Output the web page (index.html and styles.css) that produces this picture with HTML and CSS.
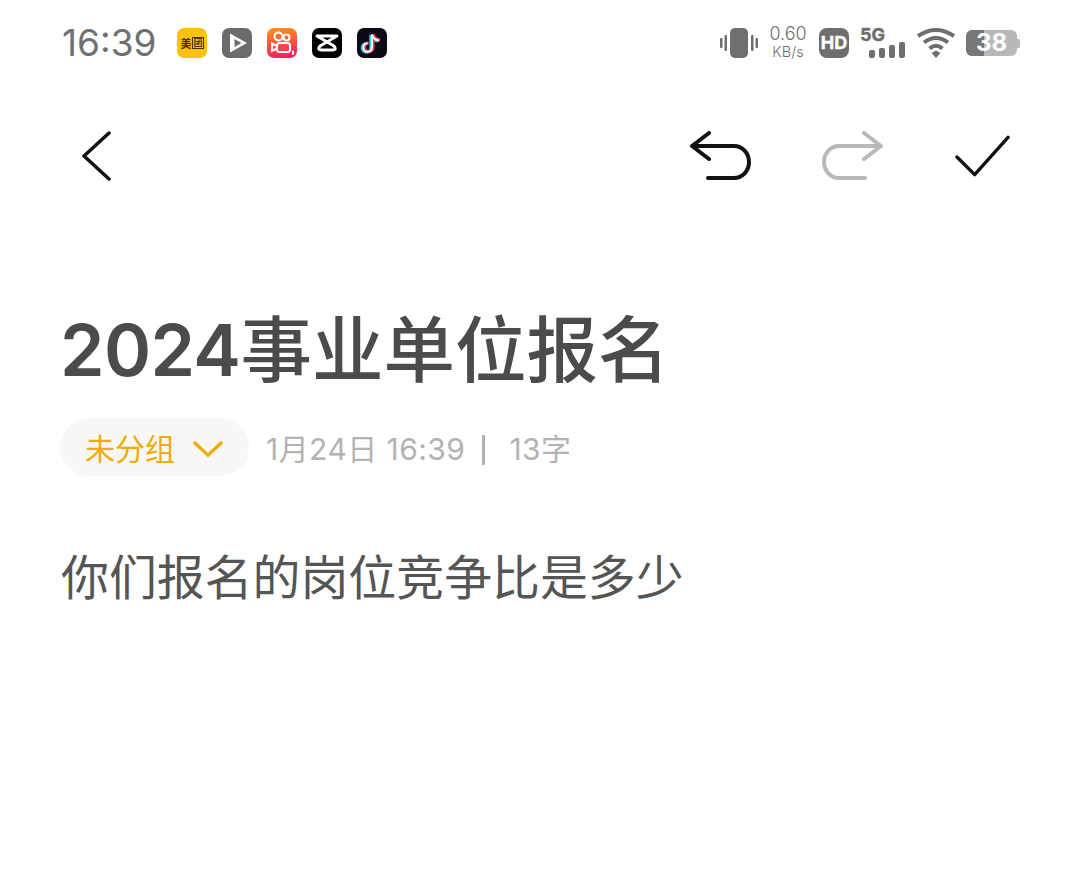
FILE: index.html
```html
<!DOCTYPE html>
<html lang="zh-CN">
<head>
    <meta charset="UTF-8">
    <title>2024事业单位报名</title>
    <link rel="stylesheet" href="styles.css">
</head>
<body>
    <!-- 状态栏 -->
    <div class="status-bar">
        <span class="clock">16:39</span>
        <div class="app-icons">
            <div class="app-icon meituan"><span>美</span><span class="tuan">团</span></div>
            <div class="app-icon player">
                <svg viewBox="0 0 30 30"><path d="M8 5.500 L25 15 L8 24.500 Z M12.500 11 V19 L19.500 15 Z" fill="#fff" fill-rule="evenodd"/></svg>
            </div>
            <div class="app-icon kuaishou">
                <svg viewBox="0 0 30 30" fill="none" stroke="#fff" stroke-width="2"><circle cx="11.500" cy="8.500" r="4"/><circle cx="19.500" cy="9.500" r="3"/><rect x="10" y="15" width="13" height="9" rx="2.500"/><path d="M10 18 L5 15.500 V23 L10 20.500"/><path d="M26 23.500 V26" stroke-linecap="round"/></svg>
            </div>
            <div class="app-icon capcut">
                <svg viewBox="0 0 30 30" fill="none" stroke="#fff" stroke-width="3" stroke-linecap="round" stroke-linejoin="round"><path d="M5 8 H25 L8 18 Q5 22 9 22 H21 Q25 22 22 18 L5 8"/></svg>
            </div>
            <div class="app-icon tiktok">
                <svg viewBox="0 0 30 30" fill="none" stroke-width="3.400">
                    <path d="M15 6 V19 a4.300 4.300 0 1 1 -4.300 -4.300 M15 6 Q16 11 22 12" stroke="#25d7e0" transform="translate(-1 .8)"/>
                    <path d="M15 6 V19 a4.300 4.300 0 1 1 -4.300 -4.300 M15 6 Q16 11 22 12" stroke="#f0335a" transform="translate(1 .2)"/>
                    <path d="M15 6 V19 a4.300 4.300 0 1 1 -4.300 -4.300 M15 6 Q16 11 22 12" stroke="#fff" stroke-width="2" transform="translate(0 .5)"/>
                </svg>
            </div>
        </div>
        <div class="status-right">
            <svg class="ic-vibrate" viewBox="0 0 38 30" fill="#6e6e6e"><rect x="10" y="0" width="18" height="30" rx="5"/><rect x="4.500" y="7" width="2.500" height="16" rx="1"/><rect x="31" y="7" width="2.500" height="16" rx="1"/><rect x="0" y="10" width="2.500" height="10" rx="1"/><rect x="35.500" y="10" width="2.500" height="10" rx="1"/></svg>
            <div class="speed"><span class="speed-num">0.60</span><span class="speed-unit">KB/s</span></div>
            <div class="hd-badge">HD</div>
            <div class="signal">
                <span class="signal-label">5G</span>
                <div class="signal-bars"><i class="bar-1"></i><i class="bar-2"></i><i class="bar-3"></i><i class="bar-4"></i></div>
            </div>
            <svg class="ic-wifi" viewBox="0 0 38 30" fill="none" stroke="#6e6e6e" stroke-width="4"><path d="M1 8 Q19 -4 37 8"/><path d="M7 14.500 Q19 5.500 31 14.500"/><path d="M12.500 20.500 Q19 15 25.500 20.500"/><path d="M14.500 25 L19 22.500 L23.500 25 L19 30 Z" fill="#6e6e6e" stroke="none"/></svg>
            <div class="battery"><div class="battery-body"><div class="battery-fill"></div><span>38</span></div><div class="battery-tip"></div></div>
        </div>
    </div>

    <!-- 工具栏 -->
    <div class="toolbar">
        <svg class="ic-back" viewBox="0 0 30 50" fill="none" stroke="#111" stroke-width="3.500" stroke-linecap="round" stroke-linejoin="round"><path d="M28 2 L3 25 L28 48"/></svg>
        <div class="toolbar-actions">
            <svg class="ic-undo" viewBox="0 0 62 50" fill="none" stroke="#111" stroke-width="4" stroke-linecap="round" stroke-linejoin="round"><path d="M19 2 L2 15 L19 28"/><path d="M3 15 H44 a15 16 0 0 1 0 32 H18"/></svg>
            <svg class="ic-redo" viewBox="0 0 62 50" fill="none" stroke="#b9b9b9" stroke-width="4" stroke-linecap="round" stroke-linejoin="round"><path d="M43 2 L60 15 L43 28"/><path d="M59 15 H18 a15 16 0 0 0 0 32 H44"/></svg>
            <svg class="ic-check" viewBox="0 0 56 42" fill="none" stroke="#111" stroke-width="3.400" stroke-linecap="round" stroke-linejoin="round"><path d="M2 22 L20 40 L54 2"/></svg>
        </div>
    </div>

    <!-- 笔记内容 -->
    <div class="note">
        <h1 class="note-title"><span class="title-num">2024</span>事业单位报名</h1>
        <div class="note-meta">
            <div class="group-pill">
                <span>未分组</span>
                <svg class="ic-down" viewBox="0 0 32 18" fill="none" stroke="#f0ab0c" stroke-width="3.600" stroke-linecap="round" stroke-linejoin="round"><path d="M2 2 L16 15 L30 2"/></svg>
            </div>
            <span class="meta-text">1月24日 16:39</span>
            <span class="meta-sep"></span>
            <span class="meta-text">13字</span>
        </div>
        <p class="note-body">你们报名的岗位竞争比是多少</p>
    </div>
</body>
</html>
```

FILE: styles.css
```css
body {
    margin: 0;
    width: 1080px;
    height: 896px;
    overflow: hidden;
    background-color: #fff;
    font-family: "Inter", "Noto Sans CJK SC", sans-serif;
}

/* 状态栏 */
.status-bar {
    display: flex;
    align-items: center;
    height: 85px;
    padding: 0 60px 0 62px;
}

.clock {
    width: 115px;
    font-size: 37px;
    font-weight: 400;
    color: #707070;
}

.app-icons {
    display: flex;
    gap: 15px;
}

.app-icon {
    width: 30px;
    height: 30px;
    border-radius: 7px;
    overflow: hidden;
}

.app-icon svg {
    display: block;
    width: 30px;
    height: 30px;
}

.meituan {
    display: flex;
    align-items: center;
    justify-content: center;
    gap: 1px;
    background-color: #fdc20f;
    font-size: 11px;
    font-weight: 700;
    color: #4a3600;
}

.tuan {
    border: 1px solid #4a3600;
    line-height: 10px;
    font-size: 9px;
}

.player { background-color: #6c6c6c; }
.kuaishou { background: linear-gradient(170deg, #fb8a1f 10%, #f5215e 90%); }
.capcut { background-color: #000; }
.tiktok { background-color: #0c0a16; }

.status-right {
    display: flex;
    align-items: center;
    margin-left: auto;
    color: #6e6e6e;
}

.ic-vibrate {
    width: 38px;
    height: 30px;
}

.speed {
    display: flex;
    flex-direction: column;
    align-items: center;
    width: 40px;
    margin-left: 10px;
}

.speed-num { font-size: 18px; line-height: 18px; font-weight: 300; }
.speed-unit { font-size: 14.500px; line-height: 18px; font-weight: 300; }

.hd-badge {
    width: 30px;
    height: 30px;
    margin-left: 11px;
    border-radius: 8px;
    background-color: #6e6e6e;
    color: #fff;
    font-family: "Liberation Sans Narrow", "Inter", sans-serif;
    font-size: 18px;
    font-weight: 700;
    line-height: 30px;
    text-align: center;
    -webkit-text-stroke: 0.4px #fff;
}

.signal {
    display: flex;
    flex-direction: column;
    width: 45px;
    margin-left: 11px;
}

.signal-label {
    height: 14px;
    font-family: "Liberation Sans Narrow", "Inter", sans-serif;
    font-size: 18px;
    font-weight: 700;
    line-height: 14px;
    -webkit-text-stroke: 0.4px #6e6e6e;
}

.signal-bars {
    display: flex;
    align-items: flex-end;
    justify-content: flex-end;
    gap: 4px;
    height: 16px;
}

.signal-bars i {
    width: 6px;
    border-radius: 2px;
    background-color: #6e6e6e;
}

.bar-1 { height: 8px; }
.bar-2 { height: 10px; }
.bar-3 { height: 13px; }
.bar-4 { height: 16px; }

.ic-wifi {
    width: 38px;
    height: 30px;
    margin-left: 12px;
}

.battery {
    display: flex;
    align-items: center;
    margin: 1px 0 0 11px;
}

.battery-body {
    position: relative;
    width: 51px;
    height: 26px;
    border-radius: 6px;
    background-color: #b8b8b8;
    color: #fff;
    font-size: 24px;
    font-weight: 700;
    line-height: 26px;
    text-align: center;
}

.battery-fill {
    position: absolute;
    left: 0;
    top: 0;
    bottom: 0;
    width: 36%;
    border-radius: 6px 0 0 6px;
    background-color: #777;
}

.battery-body span {
    position: relative;
}

.battery-tip {
    width: 3px;
    height: 9px;
    border-radius: 0 2px 2px 0;
    background-color: #b8b8b8;
}

/* 工具栏 */
.toolbar {
    display: flex;
    align-items: center;
    height: 142px;
    padding: 0 70px 0 81px;
}

.ic-back {
    width: 30px;
    height: 50px;
}

.toolbar-actions {
    display: flex;
    align-items: center;
    margin-left: auto;
}

.ic-undo, .ic-redo {
    width: 62px;
    height: 50px;
}

.ic-redo { margin-left: 69px; }

.ic-check {
    width: 55px;
    height: 42px;
    margin-left: 72px;
}

/* 笔记内容 */
.note {
    padding: 0 60px;
}

.note-title {
    margin: 75px 0 0 0;
    font-size: 71.500px;
    font-weight: 500;
    line-height: 96px;
    color: #4b4b4b;
    white-space: nowrap;
}

.title-num {
    font-weight: 600;
    letter-spacing: -0.600px;
}

.note-meta {
    display: flex;
    align-items: center;
    margin-top: 20px;
    font-size: 30px;
}

.group-pill {
    display: flex;
    align-items: center;
    gap: 18px;
    box-sizing: border-box;
    width: 189px;
    height: 58px;
    padding-left: 25px;
    border-radius: 29px;
    background-color: #f9f8f6;
    color: #f0ab0c;
}

.ic-down {
    width: 30px;
    height: 17px;
    margin-top: 4px;
}

.meta-text {
    color: #b3b3b3;
    letter-spacing: 0.450px;
}

.group-pill + .meta-text {
    margin-left: 17px;
}

.meta-sep {
    width: 3px;
    height: 30px;
    margin: 5px 24px 0 17px;
    background-color: #b3b3b3;
}

.note-body {
    margin: 60px 0 0 1px;
    padding-top: 6px;
    font-size: 47.900px;
    line-height: 72px;
    color: #555;
    white-space: nowrap;
}
```
